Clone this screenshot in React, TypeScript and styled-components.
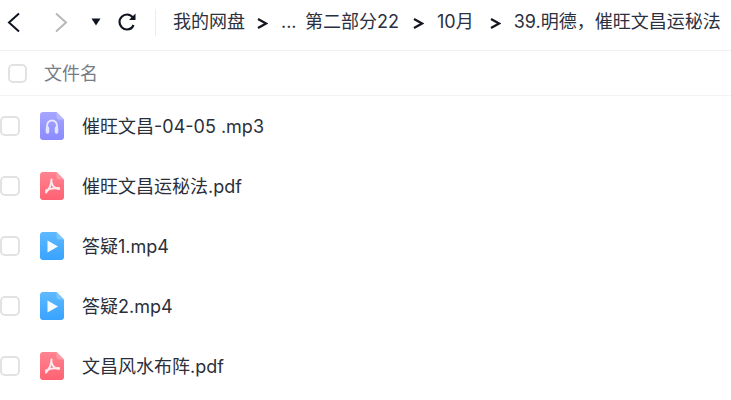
import styled, { createGlobalStyle } from "styled-components"

const GlobalStyle = createGlobalStyle`
    html, body {
        margin: 0;
        background: #fff;
        overflow: hidden;
    }
    body {
        font-family: Inter, "Noto Sans CJK SC", sans-serif;
    }
`

type FileKind = "audio" | "pdf" | "video"

const files: { name: string; kind: FileKind }[] = [
    { name: "催旺文昌-04-05 .mp3", kind: "audio" },
    { name: "催旺文昌运秘法.pdf", kind: "pdf" },
    { name: "答疑1.mp4", kind: "video" },
    { name: "答疑2.mp4", kind: "video" },
    { name: "文昌风水布阵.pdf", kind: "pdf" },
]

const kindColors: Record<FileKind, [string, string, string]> = {
    audio: ["#a6a6ff", "#8a8aff", "#b8b8ff"],
    pdf: ["#ff8490", "#ff6272", "#ff9aa4"],
    video: ["#5fb9ff", "#38a3ff", "#7cc6ff"],
}

const FileIcon = ({ kind }: { kind: FileKind }) => {
    const [top, bottom, fold] = kindColors[kind]
    return (
        <IconSvg width="24" height="28" viewBox="0 0 24 28">
            <defs>
                <linearGradient id={`grad-${kind}`} x1="0" y1="0" x2="0" y2="1">
                    <stop offset="0" stopColor={top} />
                    <stop offset="1" stopColor={bottom} />
                </linearGradient>
            </defs>
            <path
                d="M3 0H16.500L24 7.500V25C24 26.700 22.700 28 21 28H3C1.300 28 0 26.700 0 25V3C0 1.300 1.300 0 3 0Z"
                fill={`url(#grad-${kind})`}
            />
            <path d="M16.500 0L24 7.500H19C17.600 7.500 16.500 6.400 16.500 5Z" fill={fold} />
            {kind === "audio" && (
                <g fill="none" stroke="#fff" opacity="0.75">
                    <path d="M7 17V14C7 10.800 9.200 8.500 12 8.500C14.800 8.500 17 10.800 17 14V17" strokeWidth="2" />
                    <path d="M7.500 16V20M16.500 16V20" strokeWidth="3.500" strokeLinecap="round" />
                </g>
            )}
            {kind === "pdf" && (
                <g fill="none" stroke="#fff" strokeWidth="2" strokeLinecap="round" opacity="0.85">
                    <path d="M11.500 7.500C11.500 11.500 10 16 6 20.500" />
                    <path d="M11.500 10.500C12.500 14 15 16.500 19 17" />
                    <path d="M6 18.500C10 16.500 14 16 19 16" />
                </g>
            )}
            {kind === "video" && <path d="M7.500 8.500L18 14.500L7.500 20.500Z" fill="#fff" opacity="0.95" />}
        </IconSvg>
    )
}

const Chevron = ({ dir, color }: { dir: "left" | "right"; color: string }) => (
    <svg width="13" height="21" viewBox="0 0 13 21" fill="none">
        <path
            d={dir === "left" ? "M12 1.500L2 10.500L12 19.500" : "M1 1.500L11 10.500L1 19.500"}
            stroke={color}
            strokeWidth="2"
        />
    </svg>
)

const Separator = () => (
    <SepIcon width="11" height="11" viewBox="0 0 11 11" fill="none">
        <path d="M1 1L9 5.500L1 10" stroke="#14171f" strokeWidth="2.200" />
    </SepIcon>
)

export default function App() {
    return (
        <Page>
            <GlobalStyle />
            <Toolbar>
                <NavButtons>
                    <Chevron dir="left" color="#0f1420" />
                    <ForwardSlot>
                        <Chevron dir="right" color="#b8b8b8" />
                    </ForwardSlot>
                    <svg width="10" height="8" viewBox="0 0 10 8">
                        <path d="M0.500 0.500H9.500L5 7.500Z" fill="#0f1420" />
                    </svg>
                    <RefreshSlot>
                        <svg width="20" height="20" viewBox="0 0 20 20" fill="none">
                            <path d="M16.500 13C15.400 15.800 13 17.500 10 17.500C5.900 17.500 2.500 14.100 2.500 10C2.500 5.900 5.900 2.500 10 2.500C12.800 2.500 14.700 3.800 16.300 6" stroke="#0f1420" strokeWidth="2.200" />
                            <path d="M18.500 1.500V8H12Z" fill="#0f1420" />
                        </svg>
                    </RefreshSlot>
                </NavButtons>
                <Divider />
                <Crumbs>
                    <Crumb>我的网盘</Crumb>
                    <Separator />
                    <Ellipsis>...</Ellipsis>
                    <Crumb $extra={2}>第二部分22</Crumb>
                    <Separator />
                    <Crumb $extra={4}>10月</Crumb>
                    <Separator />
                    <Crumb>39.明德，催旺文昌运秘法</Crumb>
                </Crumbs>
            </Toolbar>
            <HeaderRow>
                <HeaderBox />
                <HeaderLabel>文件名</HeaderLabel>
            </HeaderRow>
            <FileList>
                {files.map((file) => (
                    <FileRow key={file.name}>
                        <RowBox />
                        <FileIcon kind={file.kind} />
                        <FileName>{file.name}</FileName>
                    </FileRow>
                ))}
            </FileList>
        </Page>
    )
}

const Page = styled.div`
    width: 731px;
    height: 400px;
    overflow: hidden;
    background: #fff;
`
const Toolbar = styled.div`
    display: flex;
    align-items: center;
    height: 44px;
    padding: 0 0 6px 7px;
    border-bottom: 1px solid #f0f0f0;
`
const NavButtons = styled.div`
    display: flex;
    align-items: center;
    width: 148px;
`
const ForwardSlot = styled.div`
    display: flex;
    margin-left: 35px;
    margin-right: 23px;
`
const RefreshSlot = styled.div`
    display: flex;
    margin-left: 16px;
`
const Divider = styled.div`
    width: 1px;
    height: 27px;
    background: #ececec;
    margin-right: 17px;
`
const Crumbs = styled.div`
    display: flex;
    align-items: center;
    white-space: nowrap;
`
const Crumb = styled.span<{ $extra?: number }>`
    font-size: 18px;
    line-height: 24px;
    color: #2b3040;
    padding-right: ${(p) => p.$extra ?? 0}px;
`
const Ellipsis = styled(Crumb)`
    width: 24px;
`
const SepIcon = styled.svg`
    margin: 2px 13px 0 12px;
    flex-shrink: 0;
`
const HeaderRow = styled.div`
    display: flex;
    align-items: center;
    height: 44px;
    padding-left: 8px;
    border-bottom: 1px solid #f3f3f3;
`
const Box = styled.div`
    box-sizing: border-box;
    border: 2px solid #e2e2e2;
    border-radius: 5px;
    background: #fff;
    flex-shrink: 0;
`
const HeaderBox = styled(Box)`
    width: 19px;
    height: 19px;
`
const HeaderLabel = styled.span`
    margin: 2px 0 0 17px;
    font-size: 18px;
    line-height: 24px;
    color: #777b85;
`
const FileList = styled.div`
    display: flex;
    flex-direction: column;
`
const FileRow = styled.div`
    display: flex;
    align-items: center;
    height: 60px;
`
const RowBox = styled(Box)`
    width: 20px;
    height: 20px;
    margin-right: 20px;
`
const IconSvg = styled.svg`
    flex-shrink: 0;
    margin-right: 18px;
`
const FileName = styled.span`
    margin-top: 2px;
    font-size: 18px;
    line-height: 24px;
    color: #2b2f3a;
`
